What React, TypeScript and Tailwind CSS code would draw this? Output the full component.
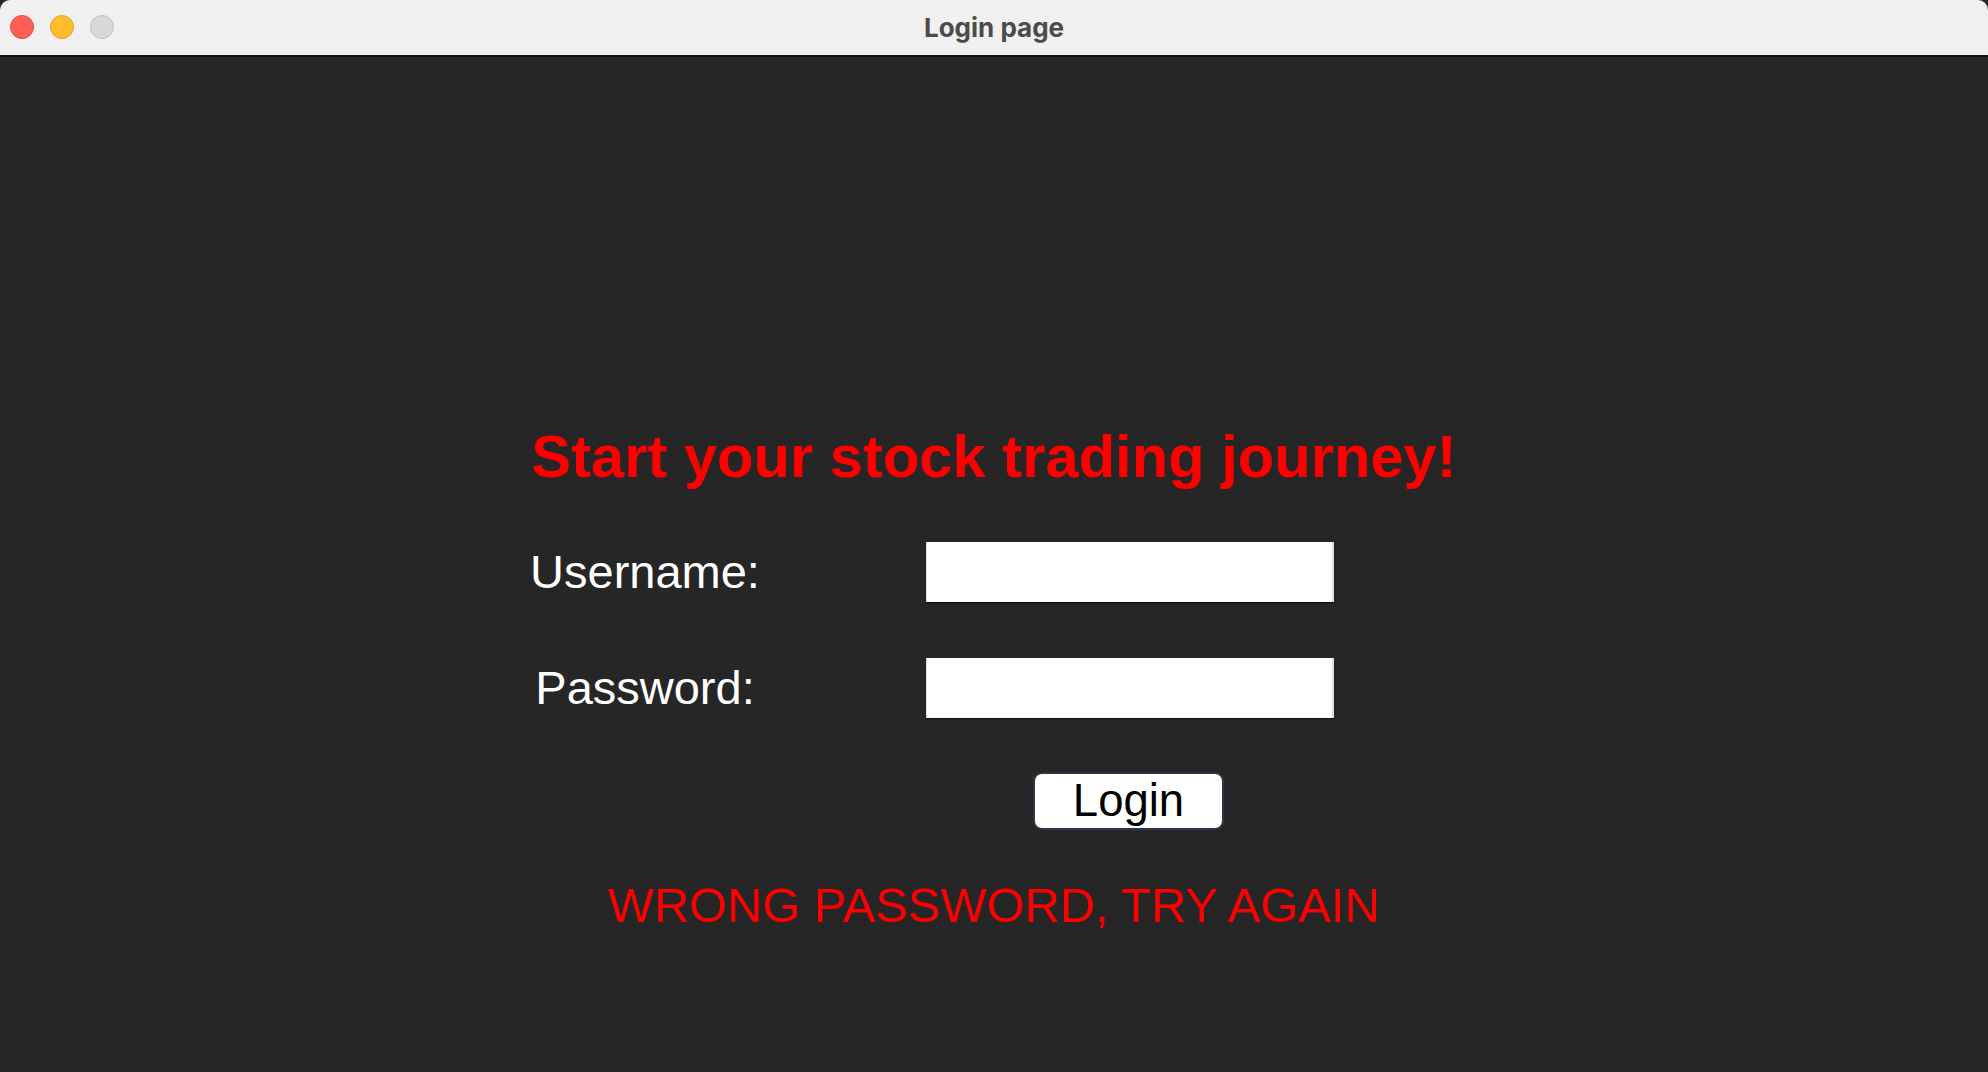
import React from "react";

export default function App() {
  return (
    <div className="w-[1988px] h-[1072px] bg-[#262626] overflow-hidden flex flex-col" style={{ fontFamily: '"Liberation Sans", Arial, sans-serif' }}>
      {/* Title bar */}
      <div className="relative h-[57px] shrink-0 bg-[#f0f0f0] rounded-t-[10px] border-b-2 border-[#111111] flex items-center justify-center">
        <div className="absolute left-[10px] top-[15px] flex gap-[16px]">
          <div className="w-[24px] h-[24px] rounded-full bg-[#ff5f57] border border-[#e2463f]" />
          <div className="w-[24px] h-[24px] rounded-full bg-[#febc2e] border border-[#dfa123]" />
          <div className="w-[24px] h-[24px] rounded-full bg-[#d8d8d8] border border-[#bfbfbf]" />
        </div>
        <span className="text-[26px] font-bold text-[#4b4b4b] leading-none" style={{ fontFamily: 'Inter, "Noto Sans", sans-serif' }}>
          Login page
        </span>
      </div>

      {/* Content */}
      <div className="flex-1 pt-[370px]">
        <div className="w-[928px] mx-auto flex flex-col">
          <h1 className="text-[59.7px] font-bold leading-[60px] text-[#ff0000] whitespace-nowrap text-center">
            Start your stock trading journey!
          </h1>

          <div className="mt-[55px] grid grid-cols-[230px_408px] gap-x-[166px] gap-y-[56px] items-center">
            <div className="text-[47px] leading-[60px] text-white text-center">Username:</div>
            <div className="h-[60px] bg-white border-l border-r-2 border-[#e2e2e2] shadow-[0_1px_1px_rgba(0,0,0,0.6)]" />
            <div className="text-[47px] leading-[60px] text-white text-center">Password:</div>
            <div className="h-[60px] bg-white border-l border-r-2 border-[#e2e2e2] shadow-[0_1px_1px_rgba(0,0,0,0.6)]" />
          </div>

          <div className="mt-[54px] grid grid-cols-[230px_408px] gap-x-[166px]">
            <div />
            <div className="flex justify-center pr-[3px]">
              <button className="w-[191px] h-[58px] bg-white rounded-[9px] border-2 border-[#2b3746] text-[45.5px] leading-none text-black flex items-center justify-center">
                Login
              </button>
            </div>
          </div>

          <div className="mt-[45px] text-[48.8px] leading-[60px] text-[#ff0000] text-center whitespace-nowrap">
            WRONG PASSWORD, TRY AGAIN
          </div>
        </div>
      </div>
    </div>
  );
}
